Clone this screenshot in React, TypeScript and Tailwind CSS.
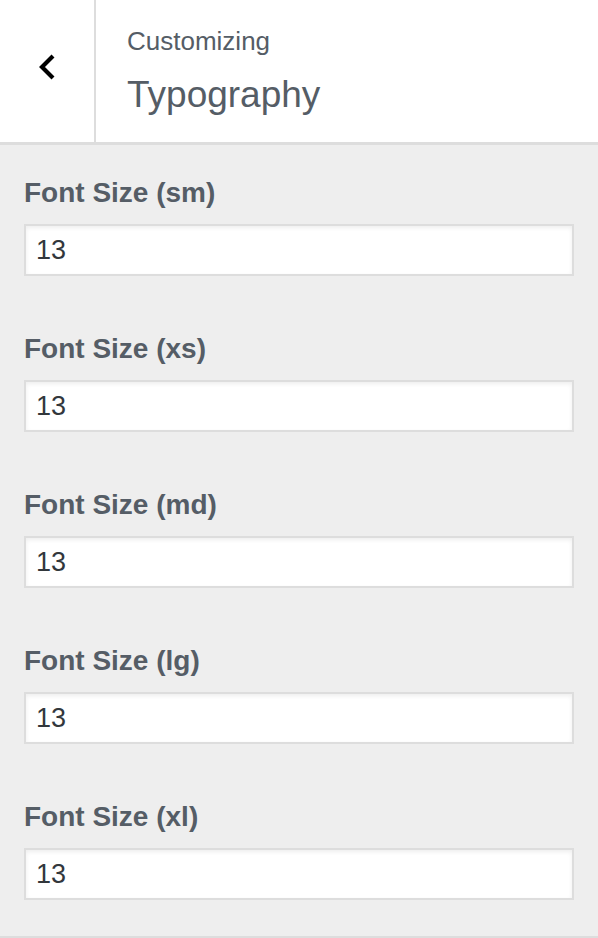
const fields = [
  { key: "sm", label: "Font Size (sm)", value: "13" },
  { key: "xs", label: "Font Size (xs)", value: "13" },
  { key: "md", label: "Font Size (md)", value: "13" },
  { key: "lg", label: "Font Size (lg)", value: "13" },
  { key: "xl", label: "Font Size (xl)", value: "13" },
];

const font = "font-['Liberation_Sans',Arial,sans-serif]";

function BackChevron() {
  return (
    <svg width="18" height="28" viewBox="0 0 18 28" fill="none" aria-hidden="true">
      <path d="M15 2 L4 13 L15 24" stroke="#000" strokeWidth="4.2" strokeLinecap="butt" strokeLinejoin="miter" />
    </svg>
  );
}

export default function App() {
  return (
    <div className={`${font} flex h-[938px] w-[598px] flex-col bg-[#eeeeee]`}>
      <header className="flex h-[145px] shrink-0 border-b-[3px] border-[#dddddd] bg-white">
        <button
          type="button"
          aria-label="Back"
          className="flex w-[96px] shrink-0 items-center justify-center border-r-2 border-[#dddddd] pb-[6px]"
        >
          <BackChevron />
        </button>
        <div className="flex flex-col pl-[31px] pt-[24px] text-[#555d66]">
          <span className="text-[26px] leading-[34px]">Customizing</span>
          <h1 className="mt-[15px] text-[37px] leading-[44px]">Typography</h1>
        </div>
      </header>

      <main className="flex flex-1 flex-col gap-[56px] border-b-2 border-[#dddddd] px-[24px] pt-[31px]">
        {fields.map((f) => (
          <label key={f.key} className="flex flex-col">
            <span className="text-[28px] font-bold leading-[34px] text-[#555d66]">{f.label}</span>
            <input
              readOnly
              value={f.value}
              className="mt-[14px] h-[52px] w-[550px] border-2 border-[#dddddd] bg-white px-[10px] text-[27px] text-[#32373c] shadow-[inset_0_2px_4px_rgba(0,0,0,0.07)] outline-none"
            />
          </label>
        ))}
      </main>
    </div>
  );
}
